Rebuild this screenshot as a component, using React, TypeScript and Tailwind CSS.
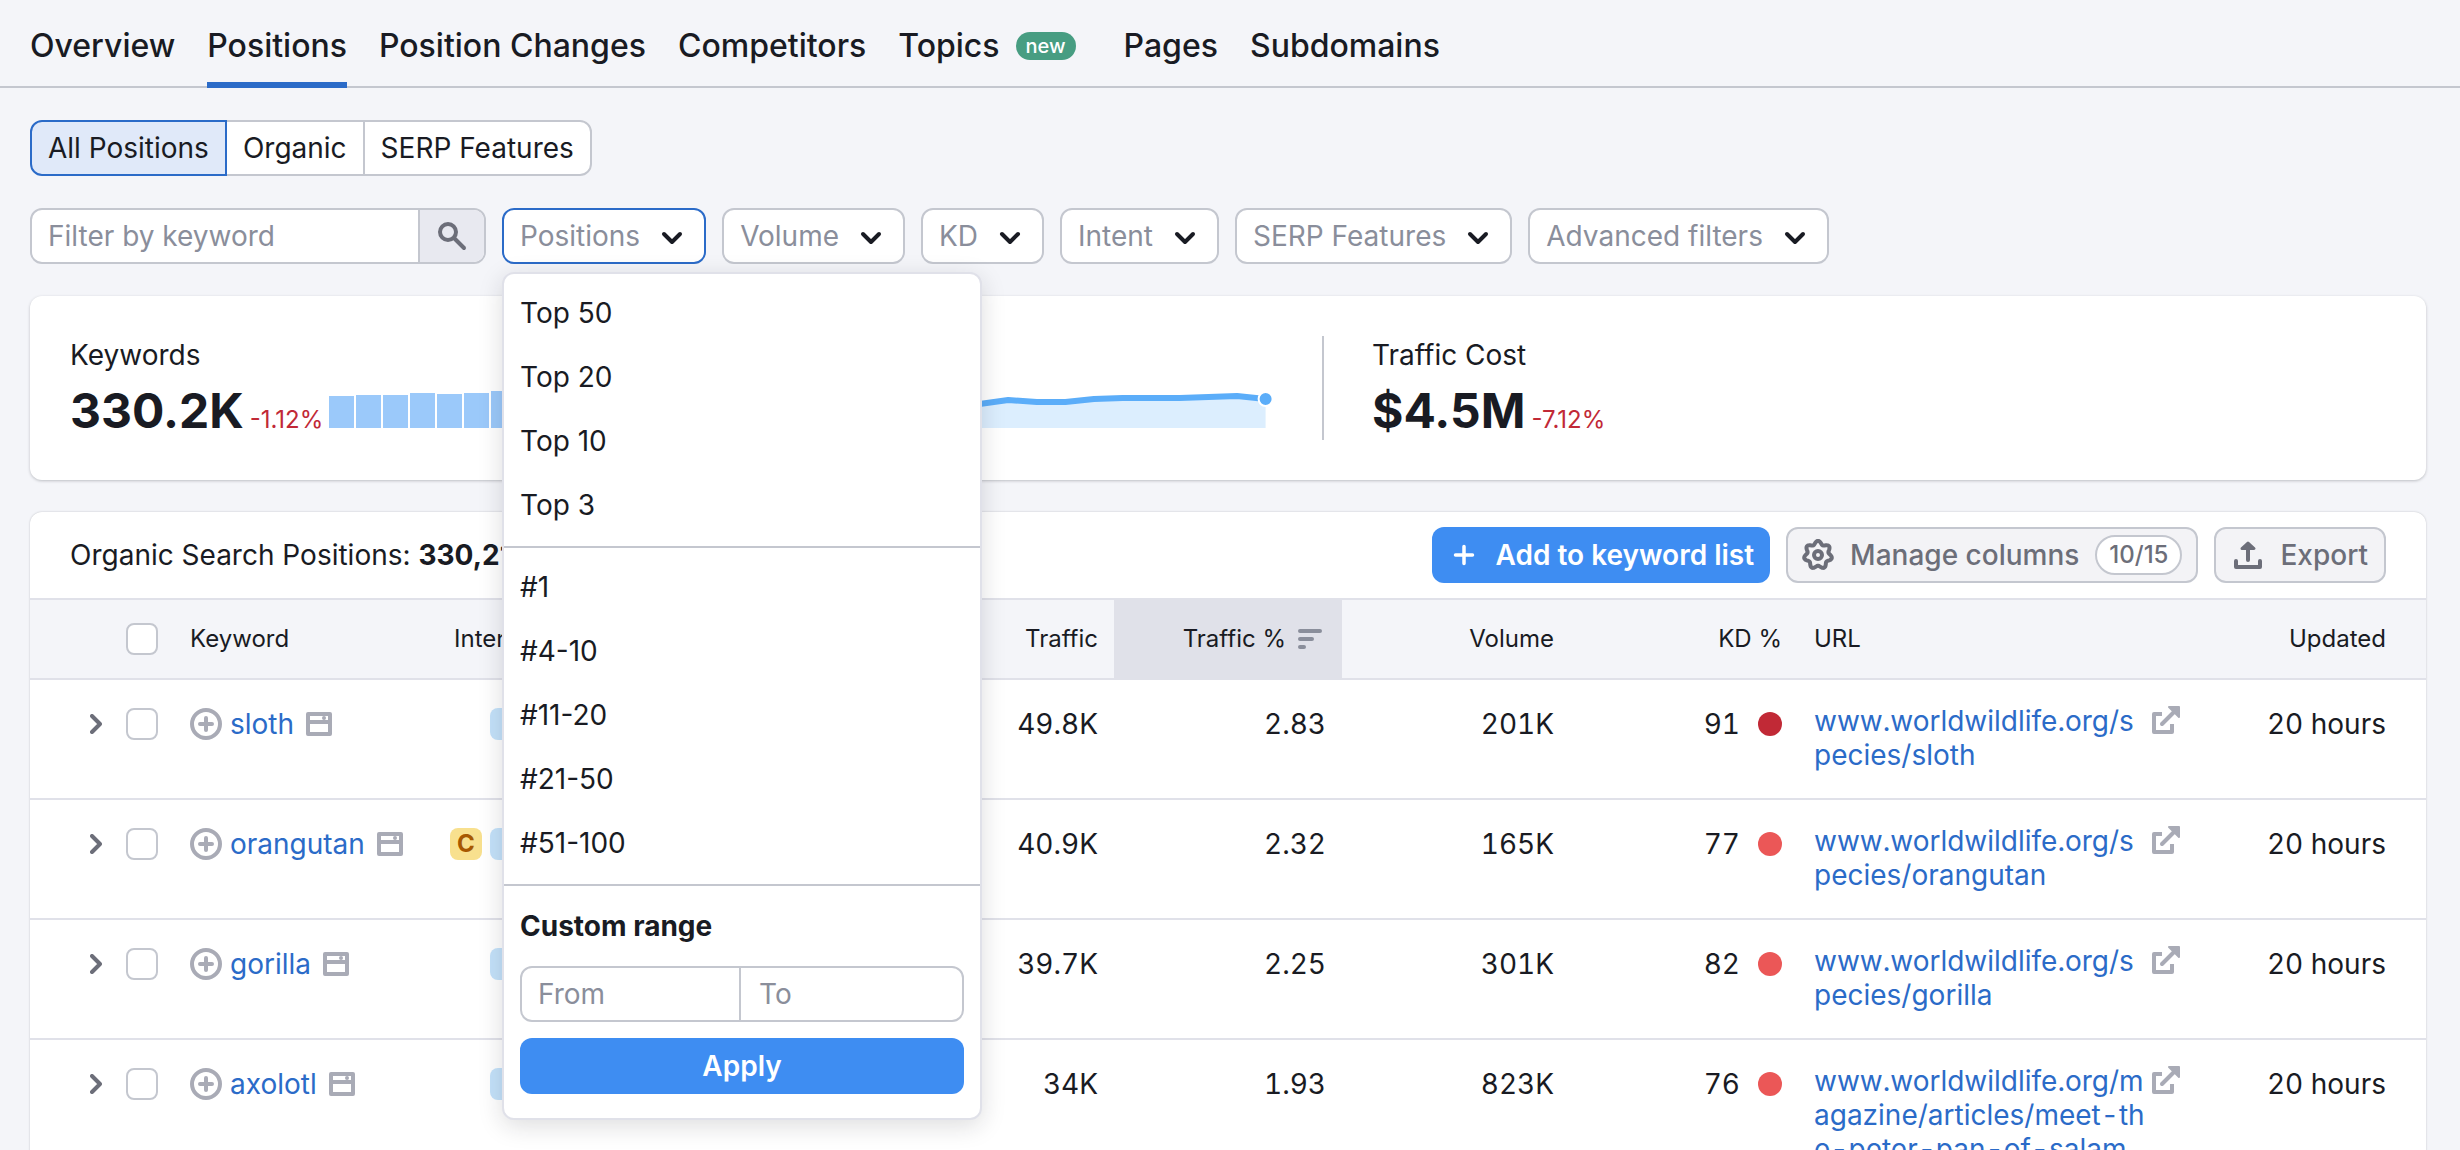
import { useState } from 'react';
import type { ReactNode } from 'react';

// =============================================================================
// TYPES
// =============================================================================

interface PositionRow {
  keyword: string;
  intents: ('C' | 'I')[];
  sf: number;
  position: number;
  traffic: string;
  trafficShare: string;
  volume: string;
  kd: number;
  url: string;
  updated: string;
}

// =============================================================================
// DATA
// =============================================================================

const TABS = ['Overview', 'Positions', 'Position Changes', 'Competitors', 'Topics', 'Pages', 'Subdomains'];

const FILTERS = ['Volume', 'KD', 'Intent', 'SERP Features', 'Advanced filters'];

const TOP_RANGES = ['Top 50', 'Top 20', 'Top 10', 'Top 3'];
const EXACT_RANGES = ['#1', '#4-10', '#11-20', '#21-50', '#51-100'];

const ROWS: PositionRow[] = [
  {
    keyword: 'sloth', intents: ['I'], sf: 7, position: 2, traffic: '49.8K', trafficShare: '2.83',
    volume: '201K', kd: 91, url: 'www.worldwildlife.org/species/sloth', updated: '20 hours',
  },
  {
    keyword: 'orangutan', intents: ['C', 'I'], sf: 7, position: 2, traffic: '40.9K', trafficShare: '2.32',
    volume: '165K', kd: 77, url: 'www.worldwildlife.org/species/orangutan', updated: '20 hours',
  },
  {
    keyword: 'gorilla', intents: ['I'], sf: 6, position: 3, traffic: '39.7K', trafficShare: '2.25',
    volume: '301K', kd: 82, url: 'www.worldwildlife.org/species/gorilla', updated: '20 hours',
  },
  {
    keyword: 'axolotl', intents: ['I'], sf: 8, position: 5, traffic: '34K', trafficShare: '1.93',
    volume: '823K', kd: 76,
    url: 'www.worldwildlife.org/magazine/articles/meet-the-peter-pan-of-salam',
    updated: '20 hours',
  },
];

const KEYWORD_BARS = [32, 33, 33, 35, 34, 35, 37, 37, 36, 37, 36, 35];
const TRAFFIC_POINTS = [22, 24, 28, 26, 26, 29, 30, 30, 30, 31, 32, 29];

// =============================================================================
// ICONS
// =============================================================================

function ChevronDown() {
  return (
    <svg viewBox="0 0 32 32" className="size-8 text-[#191b23]" fill="none" stroke="currentColor" strokeWidth="4" strokeLinecap="round" strokeLinejoin="round" aria-hidden="true">
      <path d="M8 14l8 8 8-8" />
    </svg>
  );
}

function ChevronRight() {
  return (
    <svg viewBox="0 0 12 20" className="h-5 w-3 text-[#6c6e79]" fill="none" stroke="currentColor" strokeWidth="4" strokeLinecap="round" strokeLinejoin="round" aria-hidden="true">
      <path d="M2 2l8 8-8 8" />
    </svg>
  );
}

function SearchIcon() {
  return (
    <svg viewBox="0 0 32 32" className="size-8 text-[#6c6e79]" fill="none" stroke="currentColor" strokeWidth="4" strokeLinecap="round" aria-hidden="true">
      <circle cx="12" cy="12" r="8" />
      <path d="M18.500 18.500L28 28" />
    </svg>
  );
}

function PlusIcon() {
  return (
    <svg viewBox="0 0 32 32" className="size-8" fill="none" stroke="currentColor" strokeWidth="3.500" strokeLinecap="round" aria-hidden="true">
      <path d="M16 7.500v17M7.500 16h17" />
    </svg>
  );
}

// Seven rounded teeth, traced as a wavy circle
const GEAR_OUTLINE = Array.from({ length: 112 }, (_, i) => {
  const angle = (i / 112) * Math.PI * 2;
  const radius = 12.4 + 1.7 * Math.cos(7 * angle);
  return `${(16 + radius * Math.sin(angle)).toFixed(2)},${(16 - radius * Math.cos(angle)).toFixed(2)}`;
}).join(' ');

function GearIcon() {
  return (
    <svg viewBox="0 0 32 32" className="size-8" fill="none" stroke="currentColor" strokeWidth="4" strokeLinejoin="round" aria-hidden="true">
      <polygon points={GEAR_OUTLINE} />
      <circle cx="16" cy="16" r="4" />
    </svg>
  );
}

function ExportIcon() {
  return (
    <svg viewBox="0 0 32 32" className="size-8" fill="none" stroke="currentColor" strokeWidth="4" strokeLinecap="round" strokeLinejoin="round" aria-hidden="true">
      <path d="M4 22v6h24v-6" />
      <path d="M16 21V7" />
      <path d="M10 9.500L16 4l6 5.500z" fill="currentColor" strokeWidth="3" />
    </svg>
  );
}

function SortIcon() {
  return (
    <svg viewBox="0 0 24 20" className="h-5 w-6 text-[#8a8e9b]" fill="none" stroke="currentColor" strokeWidth="4" strokeLinecap="round" aria-hidden="true">
      <path d="M2 2h20M2 10h12M2 18h4" />
    </svg>
  );
}

function AddCircleIcon() {
  return (
    <svg viewBox="0 0 32 32" className="size-8" fill="none" stroke="currentColor" strokeLinecap="round" aria-hidden="true">
      <circle cx="16" cy="16" r="14" strokeWidth="4" />
      <path d="M16 10v12M10 16h12" strokeWidth="4" />
    </svg>
  );
}

function SerpIcon() {
  return (
    <svg viewBox="0 0 26 24" className="h-6 w-[26px]" fill="none" stroke="currentColor" strokeLinejoin="round" aria-hidden="true">
      <path d="M2 2h22v20H2z" strokeWidth="4" />
      <path d="M2 10h22" strokeWidth="4" />
      <circle cx="18" cy="6" r="2" fill="currentColor" stroke="none" />
    </svg>
  );
}

function ExternalIcon() {
  return (
    <svg viewBox="0 0 32 32" className="size-8" fill="none" stroke="currentColor" strokeWidth="4" strokeLinejoin="round" aria-hidden="true">
      <path d="M12 10H4v18h18v-8" />
      <path d="M12 20L26 6" strokeLinecap="round" />
      <path d="M19 3h10v10z" fill="currentColor" strokeWidth="2" />
    </svg>
  );
}

// =============================================================================
// CHARTS
// =============================================================================

function KeywordsChart() {
  return (
    <svg viewBox="0 0 323 40" className="h-10 w-[323px] shrink-0" aria-hidden="true">
      {KEYWORD_BARS.map((value, i) => (
        <rect key={i} x={i * 27} y={40 - value} width="25" height={value} fill="#9bc9fa" />
      ))}
    </svg>
  );
}

function TrafficChart() {
  const points = TRAFFIC_POINTS.map((value, i) => ({ x: i * 28.6, y: 40 - value }));
  const line = points.map((p) => `${p.x},${p.y}`).join(' L');
  const last = points[points.length - 1];

  return (
    <svg viewBox="0 0 323 40" className="mr-12 ml-auto h-10 w-[323px] shrink-0" aria-hidden="true">
      <path d={`M${line} L${last.x},40 L0,40z`} fill="#dceefe" />
      <path d={`M${line}`} fill="none" stroke="#5badf9" strokeWidth="6" strokeLinejoin="round" />
      <circle cx={last.x} cy={last.y} r="7" fill="#5badf9" stroke="#fff" strokeWidth="2" />
    </svg>
  );
}

// =============================================================================
// SUB-COMPONENTS
// =============================================================================

function TabNav() {
  return (
    <nav className="flex h-[88px] gap-8 border-b-2 border-[#c4c7cf] px-[30px]">
      {TABS.map((tab) => (
        <a
          key={tab}
          href="#"
          className={`-mb-0.5 flex items-center gap-4 pt-1 text-[32px] font-medium ${
            tab === 'Positions' ? 'shadow-[inset_0_-6px_0_#2b6bc8]' : ''
          }`}
        >
          {tab}
          {tab === 'Topics' && (
            <span className="mr-4 flex h-7 items-center rounded-[14px] bg-[#479d82] px-2.5 text-xl text-white">new</span>
          )}
        </a>
      ))}
    </nav>
  );
}

function FilterButton({ label, open, onClick }: { label: string; open?: boolean; onClick?: () => void }) {
  return (
    <button
      type="button"
      aria-haspopup="menu"
      aria-expanded={open}
      onClick={onClick}
      className={`flex h-14 items-center gap-4 rounded-xl border-2 bg-white px-4 text-[#8a8e9b] ${
        open ? 'border-[#2b6bc8]' : 'border-[#c4c7cf]'
      }`}
    >
      {label}
      <ChevronDown />
    </button>
  );
}

function RangeList({ items }: { items: string[] }) {
  return (
    <ul className="border-b-2 border-[#c4c7cf] pt-[7px] pb-[9px]">
      {items.map((item) => (
        <li key={item}>
          <button type="button" className="flex h-16 w-full items-center px-4 text-left">
            {item}
          </button>
        </li>
      ))}
    </ul>
  );
}

function PositionsMenu() {
  return (
    <div className="absolute top-16 left-0 z-10 w-[480px] rounded-xl border-2 border-[#e0e1e9] bg-white shadow-[0_6px_24px_rgba(25,27,35,0.15)]">
      <RangeList items={TOP_RANGES} />
      <RangeList items={EXACT_RANGES} />
      <div className="px-4 pt-5 pb-6">
        <h3 className="leading-10 font-bold">Custom range</h3>
        <div className="mt-5 flex h-14 overflow-hidden rounded-xl border-2 border-[#c4c7cf]">
          <input aria-label="From" placeholder="From" className="w-0 flex-1 border-r-2 border-[#c4c7cf] px-4 placeholder:text-[#8a8e9b]" />
          <input aria-label="To" placeholder="To" className="w-0 flex-1 px-[18px] placeholder:text-[#8a8e9b]" />
        </div>
        <button type="button" className="mt-4 h-14 w-full rounded-xl bg-[#3e8df2] font-semibold text-white">
          Apply
        </button>
      </div>
    </div>
  );
}

function Metric({ label, value, change, chart }: { label: string; value: string; change: string; chart?: ReactNode }) {
  return (
    <div className="border-[#c4c7cf] not-first:border-l-2 not-first:pl-12">
      <div className="leading-[38px]">{label}</div>
      <div className="mt-2 flex items-baseline gap-1.5">
        <span className="text-5xl leading-[58px] font-bold">{value}</span>
        <span className="text-2xl text-[#c12936]">{change}</span>
        {chart}
      </div>
    </div>
  );
}

function Checkbox({ label }: { label: string }) {
  return (
    <input
      type="checkbox"
      aria-label={label}
      className="block size-8 appearance-none rounded-lg border-2 border-[#c4c7cf] bg-white checked:bg-[#3e8df2]"
    />
  );
}

function IntentBadge({ intent }: { intent: 'C' | 'I' }) {
  return (
    <span
      className={`flex size-8 items-center justify-center rounded-lg text-2xl font-bold ${
        intent === 'C' ? 'bg-[#f8e08e] text-[#a75800]' : 'bg-[#c4e2fa] text-[#2b6bc8]'
      }`}
    >
      {intent}
    </span>
  );
}

function PositionsTable() {
  return (
    <table className="w-full table-fixed border-collapse">
      <colgroup>
        <col className="w-[144px]" />
        <col className="w-[260px]" />
        <col className="w-[104px]" />
        <col />
        <col className="w-[150px]" />
        <col className="w-[228px]" />
        <col className="w-[228px]" />
        <col className="w-[228px]" />
        <col className="w-[228px]" />
        <col className="w-[400px]" />
        <col className="w-[228px]" />
      </colgroup>
      <thead className="bg-[#f4f5f9] text-2xl">
        <tr className="h-20 border-y-2 border-[#e0e1e9] text-right *:font-normal">
          <th className="pl-24">
            <Checkbox label="Select all keywords" />
          </th>
          <th className="px-4 text-left">Keyword</th>
          <th className="pl-5 text-left">Intent</th>
          <th className="px-4">SF</th>
          <th className="px-4">Pos.</th>
          <th className="px-4">Traffic</th>
          <th className="bg-[#e0e1e9] px-4">
            <div className="flex items-center justify-end gap-3 pr-1">
              Traffic %
              <SortIcon />
            </div>
          </th>
          <th className="px-4">Volume</th>
          <th className="px-4">KD %</th>
          <th className="px-4 text-left">URL</th>
          <th className="pr-10 pl-4">Updated</th>
        </tr>
      </thead>
      <tbody className="tabular-nums">
        {ROWS.map((row) => (
          <tr key={row.keyword} className="h-[120px] border-b-2 border-[#e0e1e9] text-right align-top leading-8">
            <td className="pt-7">
              <div className="flex items-center gap-6 pl-15">
                <button type="button" aria-label={`Expand ${row.keyword}`}>
                  <ChevronRight />
                </button>
                <Checkbox label={`Select ${row.keyword}`} />
              </div>
            </td>
            <td className="pt-7 pl-4">
              <div className="flex items-center text-[#a9abb6]">
                <button type="button" aria-label={`Add ${row.keyword}`}>
                  <AddCircleIcon />
                </button>
                <a href="#" className="mr-3 ml-2 text-[#2b6bc8]">{row.keyword}</a>
                <SerpIcon />
              </div>
            </td>
            <td className="pt-7 pr-4">
              <div className="flex justify-end gap-2">
                {row.intents.map((intent) => <IntentBadge key={intent} intent={intent} />)}
              </div>
            </td>
            <td className="px-4 pt-7">{row.sf}</td>
            <td className="px-4 pt-7">{row.position}</td>
            <td className="px-4 pt-7">{row.traffic}</td>
            <td className="px-4 pt-7">{row.trafficShare}</td>
            <td className="px-4 pt-7">{row.volume}</td>
            <td className="px-4 pt-7">
              <div className="flex items-center justify-end gap-[18px]">
                {row.kd}
                <span className={`size-6 rounded-full ${row.kd > 84 ? 'bg-[#c12936]' : 'bg-[#eb5757]'}`} />
              </div>
            </td>
            <td className="px-4 pt-6">
              <div className="flex gap-1 text-left leading-[34px]">
                <a href="#" className="w-0 flex-1 break-all text-[#2b6bc8]">{row.url}</a>
                <a href="#" aria-label={`Open ${row.url}`} className="h-8 text-[#a9abb6]">
                  <ExternalIcon />
                </a>
              </div>
            </td>
            <td className="pt-7 pr-10 pl-4">{row.updated}</td>
          </tr>
        ))}
      </tbody>
    </table>
  );
}

// =============================================================================
// PAGE
// =============================================================================

export default function App() {
  const [menuOpen, setMenuOpen] = useState(true);

  return (
    <div className="h-screen overflow-hidden bg-[#f4f5f9] font-['Inter',sans-serif] text-[28px] leading-8 text-[#191b23] [&_button]:cursor-pointer">
      <TabNav />

      <main className="pt-8 pr-[34px] pl-[30px]">
        <div className="flex h-14 w-fit rounded-xl bg-white">
          <button type="button" className="rounded-l-xl border-2 border-[#2b6bc8] bg-[#e0e9f9] px-4">All Positions</button>
          <button type="button" className="border-y-2 border-[#c4c7cf] px-4">Organic</button>
          <button type="button" className="rounded-r-xl border-2 border-[#c4c7cf] px-4">SERP Features</button>
        </div>

        <div className="mt-8 flex flex-wrap gap-4">
          <form className="flex h-14 w-[456px] overflow-hidden rounded-xl border-2 border-[#c4c7cf] bg-white">
            <input aria-label="Filter by keyword" placeholder="Filter by keyword" className="min-w-0 flex-1 px-4 placeholder:text-[#8a8e9b]" />
            <button type="button" aria-label="Search" className="border-l-2 border-[#c4c7cf] bg-[#e8e9f0] px-4">
              <SearchIcon />
            </button>
          </form>
          <div className="relative">
            <FilterButton label="Positions" open={menuOpen} onClick={() => setMenuOpen(!menuOpen)} />
            {menuOpen && <PositionsMenu />}
          </div>
          {FILTERS.map((label) => <FilterButton key={label} label={label} />)}
        </div>

        <section className="mt-8 grid grid-cols-[602fr_650fr_1064fr] rounded-xl bg-white p-10 shadow-[0_1px_3px_rgba(25,27,35,0.25)]">
          <Metric label="Keywords" value="330.2K" change="-1.12%" chart={<KeywordsChart />} />
          <Metric label="Traffic" value="1.8M" change="-3.2%" chart={<TrafficChart />} />
          <Metric label="Traffic Cost" value="$4.5M" change="-7.12%" />
        </section>

        <section className="mt-8 rounded-t-xl bg-white shadow-[0_0_2px_rgba(25,27,35,0.25)]">
          <div className="flex h-[86px] items-center gap-4 px-10">
            <h2 className="flex-1">
              Organic Search Positions: <b>330,216</b>
            </h2>
            <button type="button" className="flex h-14 items-center gap-4 rounded-xl bg-[#3e8df2] px-4 font-semibold text-white">
              <PlusIcon />
              Add to keyword list
            </button>
            <button type="button" className="flex h-14 items-center gap-4 rounded-xl border-2 border-[#c4c7cf] bg-[#f3f3f6] px-3.5 font-medium text-[#6c6e79]">
              <GearIcon />
              Manage columns
              <span className="flex h-10 items-center rounded-[20px] border-2 border-[#c4c7cf] bg-white px-3 text-2xl">10/15</span>
            </button>
            <button type="button" className="flex h-14 items-center gap-4 rounded-xl border-2 border-[#c4c7cf] bg-[#f3f3f6] px-4 font-medium text-[#6c6e79]">
              <ExportIcon />
              Export
            </button>
          </div>
          <PositionsTable />
        </section>
      </main>
    </div>
  );
}
